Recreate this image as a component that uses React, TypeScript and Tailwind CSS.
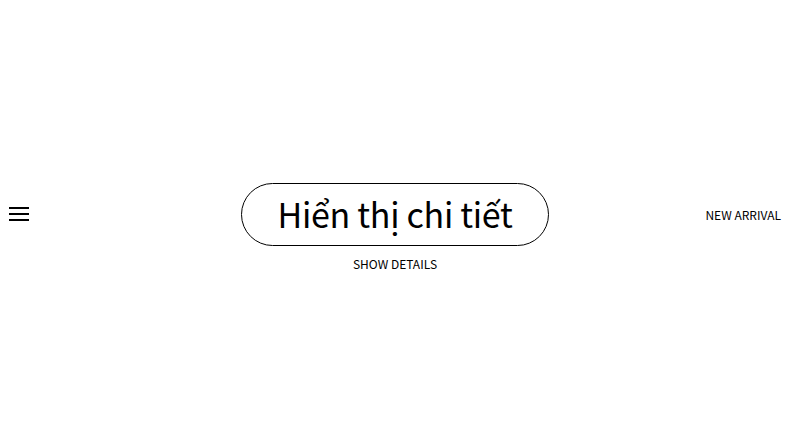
import React from 'react';

const App: React.FC = () => {
  return (
    <div className="w-full h-[431px] bg-white pt-[183px] font-['Noto_Sans_CJK_SC',sans-serif] text-black">
      <div className="grid grid-cols-[1fr_auto_1fr] items-start">
        <div className="pl-[9px] pt-[24px]">
          <button className="flex flex-col gap-[4px] w-[20px]" aria-label="Menu">
            <span className="block h-[2px] w-full bg-black" />
            <span className="block h-[2px] w-full bg-black" />
            <span className="block h-[2px] w-full bg-black" />
          </button>
        </div>

        <div className="flex flex-col items-center">
          <button className="h-[63px] w-[308px] rounded-full border-[1.5px] border-black flex items-center justify-center">
            <span className="text-[34px] leading-none tracking-[-0.3px] pb-[2px]">Hiển thị chi tiết</span>
          </button>
          <span className="mt-[12px] text-[12px] leading-none">SHOW DETAILS</span>
        </div>

        <div className="flex justify-end pr-[9px] pt-[26px]">
          <span className="text-[12px] leading-none">NEW ARRIVAL</span>
        </div>
      </div>
    </div>
  );
};

export default App;
